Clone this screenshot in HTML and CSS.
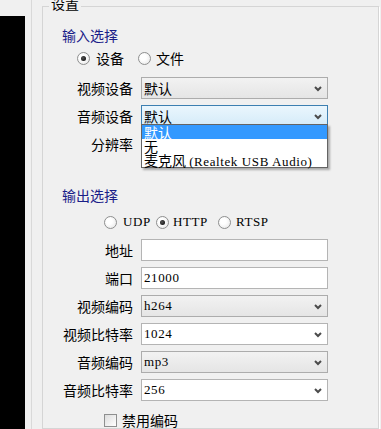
FILE: index.html
```html
<!DOCTYPE html>
<html lang="zh-CN">
<head>
  <meta charset="UTF-8" />
  <title>设置</title>
  <link rel="stylesheet" href="styles.css">
</head>
<body>

<div id="wrap">
  <div id="preview"></div>
  <div id="splitter"></div>

  <fieldset id="settings">
    <legend>设置</legend>

    <div class="section-title">输入选择</div>
    <div class="radios radios-input">
      <label class="opt opt-input"><span class="radio checked"></span>设备</label>
      <label class="opt"><span class="radio"></span>文件</label>
    </div>

    <div class="form">
      <div class="label">视频设备</div>
      <div class="combo">默认<svg class="arrow" width="8" height="6" viewBox="0 0 8 6"><polyline points="1,1 4,4 7,1" /></svg></div>

      <div class="label">音频设备</div>
      <div class="combo focused">默认<svg class="arrow" width="8" height="6" viewBox="0 0 8 6"><polyline points="1,1 4,4 7,1" /></svg>
        <div class="droplist">
          <div class="item selected">默认</div>
          <div class="item">无</div>
          <div class="item">麦克风 <span class="latin">(Realtek USB Audio)</span></div>
        </div>
      </div>

      <div class="label">分辨率</div>
      <div class="combo"></div>
    </div>

    <div class="section-title section-output">输出选择</div>
    <div class="radios radios-output">
      <label class="opt opt-udp"><span class="radio"></span><span class="latin">UDP</span></label>
      <label class="opt opt-http"><span class="radio checked"></span><span class="latin">HTTP</span></label>
      <label class="opt"><span class="radio"></span><span class="latin">RTSP</span></label>
    </div>

    <div class="form form-output">
      <div class="label">地址</div>
      <div class="textbox"></div>

      <div class="label">端口</div>
      <div class="textbox"><span class="latin">21000</span></div>

      <div class="label">视频编码</div>
      <div class="combo"><span class="latin">h264</span><svg class="arrow" width="8" height="6" viewBox="0 0 8 6"><polyline points="1,1 4,4 7,1" /></svg></div>

      <div class="label">视频比特率</div>
      <div class="combo editable"><span class="latin">1024</span><svg class="arrow" width="8" height="6" viewBox="0 0 8 6"><polyline points="1,1 4,4 7,1" /></svg></div>

      <div class="label">音频编码</div>
      <div class="combo"><span class="latin">mp3</span><svg class="arrow" width="8" height="6" viewBox="0 0 8 6"><polyline points="1,1 4,4 7,1" /></svg></div>

      <div class="label">音频比特率</div>
      <div class="combo editable"><span class="latin">256</span><svg class="arrow" width="8" height="6" viewBox="0 0 8 6"><polyline points="1,1 4,4 7,1" /></svg></div>
    </div>

    <label class="check-row"><span class="checkbox"></span>禁用编码</label>
  </fieldset>
</div>

</body>
</html>
```

FILE: styles.css
```css
body {
  margin: 0;
  background: #f0f0f0;
  color: #000;
  font-family: "Noto Sans CJK SC", "Noto Sans", sans-serif;
  font-size: 14px;
  overflow: hidden;
}

#wrap {
  display: flex;
  height: 429px;
}

#preview {
  width: 25px;
  margin-top: 16px;
  background: #000;
}

#splitter {
  width: 1px;
  margin-left: 6px;
  background: #d9d9d9;
}

#settings {
  margin: -4px 0 0 10px;
  padding: 0;
  width: 335px;
  border: 1px solid #d5d5d5;
  box-shadow: 1px 1px 0 #fff;
  min-inline-size: 0;
}

#settings legend {
  margin-left: 6px;
  padding: 0 2px 6px;
  line-height: 14px;
}

.latin {
  font-family: "Liberation Serif", "Times New Roman", serif;
  font-size: 13px;
  letter-spacing: 0.6px;
}

.section-title {
  margin: 9px 0 0 19px;
  line-height: 20px;
  color: #1a2088;
}

.section-output {
  margin-top: 30px;
}

.radios {
  display: flex;
  align-items: center;
  height: 20px;
  margin-top: 3px;
}

.radios-input {
  padding-left: 34px;
}

.radios-output {
  margin-top: 7px;
  padding-left: 61px;
}

.opt {
  display: flex;
  align-items: center;
  gap: 5px;
}

.opt-input {
  width: 61px;
  gap: 6px;
}

.opt-udp {
  width: 52px;
  gap: 6px;
}

.opt-http {
  width: 62px;
  gap: 4px;
}

.radio {
  box-sizing: border-box;
  width: 13px;
  height: 13px;
  border: 1px solid #8e8f8f;
  border-radius: 50%;
  background: radial-gradient(circle at 40% 40%, #fff 30%, #e2e2e2 100%);
  display: flex;
  align-items: center;
  justify-content: center;
}

.radio.checked::after {
  content: "";
  width: 5px;
  height: 5px;
  border-radius: 50%;
  background: radial-gradient(circle at 40% 40%, #555 0%, #111 80%);
}

.form {
  display: grid;
  grid-template-columns: 90px 187px;
  column-gap: 8px;
  row-gap: 6px;
  margin-top: 9px;
}

.form-output {
  margin-top: 7px;
}

.label {
  text-align: right;
  line-height: 22px;
}

.combo,
.textbox {
  position: relative;
  box-sizing: border-box;
  height: 22px;
  border: 1px solid #acacac;
  padding-left: 2px;
  line-height: 20px;
  display: flex;
  align-items: center;
}

.combo {
  background: linear-gradient(#f2f2f2, #e5e5e5);
}

.combo.editable,
.textbox {
  background: #fff;
  border-color: #b4b4b4;
}

.combo.focused {
  background: linear-gradient(#eaf6fd, #d4ebf9);
  border-color: #3c7fb1;
}

.arrow {
  position: absolute;
  right: 5px;
  top: 8px;
}

.arrow polyline {
  fill: none;
  stroke: #4b4b4b;
  stroke-width: 2;
}

.droplist {
  position: absolute;
  left: -1px;
  right: -1px;
  top: 18px;
  z-index: 2;
  background: #fff;
  border: 1px solid #646464;
  box-shadow: 2px 2px 2px rgba(0, 0, 0, 0.3);
}

.droplist .item {
  height: 14px;
  line-height: 14px;
  padding-left: 2px;
  white-space: nowrap;
}

.droplist .item.selected {
  background: #3399ff;
  color: #fff;
}

.check-row {
  display: flex;
  align-items: center;
  gap: 5px;
  height: 20px;
  margin: 9px 0 0 61px;
}

.checkbox {
  box-sizing: border-box;
  width: 13px;
  height: 13px;
  border: 1px solid #8e8f8f;
  background: linear-gradient(135deg, #dcdcdc, #fff);
}
```
